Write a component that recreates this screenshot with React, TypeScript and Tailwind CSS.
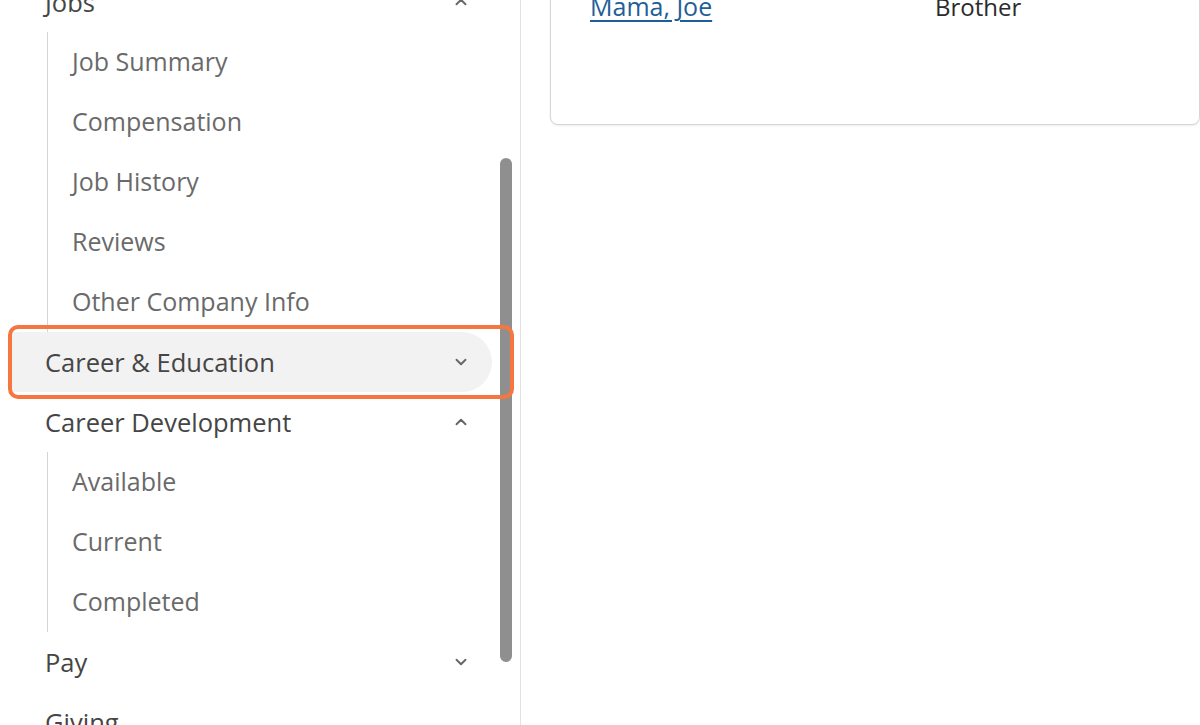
import { ChevronDown, ChevronUp } from 'lucide-react';

type NavItem = {
    label: string;
    open?: boolean;
    active?: boolean;
    noIcon?: boolean;
    children?: string[];
};

const items: NavItem[] = [
    { label: 'Jobs', open: true, children: ['Job Summary', 'Compensation', 'Job History', 'Reviews', 'Other Company Info'] },
    { label: 'Career & Education', active: true },
    { label: 'Career Development', open: true, children: ['Available', 'Current', 'Completed'] },
    { label: 'Pay' },
    { label: 'Giving', noIcon: true },
];

function TopRow({ item }: { item: NavItem }) {
    return (
        <div className="relative ml-3 mr-7">
            <div
                className={`flex h-[60px] items-center justify-between rounded-r-full pl-[33px] pr-[22px] text-[25.5px] text-[#454545] ${
                    item.active ? 'bg-[#f2f2f2]' : ''
                }`}
            >
                <span>{item.label}</span>
                {item.noIcon ? null : item.open ? (
                    <ChevronUp className="h-[18px] w-[18px] text-[#666]" strokeWidth={2.5} />
                ) : (
                    <ChevronDown className="h-[18px] w-[18px] text-[#666]" strokeWidth={2.5} />
                )}
            </div>
            {item.active && (
                <div className="pointer-events-none absolute -left-1 -right-[22px] -top-[7px] -bottom-[7px] z-10 rounded-[10px] border-4 border-[#f5773f]" />
            )}
        </div>
    );
}

export default function App() {
    return (
        <div
            className="flex h-[725px] w-[1200px] overflow-hidden bg-white"
            style={{ fontFamily: '"Open Sans", "Noto Sans", sans-serif' }}
        >
            {/* Sidebar */}
            <aside className="relative h-full w-[521px] shrink-0 overflow-hidden border-r border-[#e2e2e2]">
                {/* Scrollbar thumb */}
                <div className="absolute left-[500px] top-[158px] h-[504px] w-3 rounded-full bg-[#8f8f8f]" />
                <nav className="relative -mt-[28px]">
                    {items.map((item) => (
                        <div key={item.label}>
                            <TopRow item={item} />
                            {item.children && (
                                <ul className="ml-[47px] border-l border-[#d4d4d4]">
                                    {item.children.map((child) => (
                                        <li key={child} className="flex h-[60px] items-center pl-6 text-[25px] text-[#6a6a6a]">
                                            {child}
                                        </li>
                                    ))}
                                </ul>
                            )}
                        </div>
                    ))}
                </nav>
            </aside>

            {/* Main content */}
            <main className="flex-1 pl-[29px]">
                <div className="-mt-[40px] h-[165px] rounded-lg border border-[#d6d6d6] bg-white shadow-[0_1px_2px_rgba(0,0,0,0.08)]">
                    <div className="flex items-center pl-[39px] pt-[27px]">
                        <a href="#" className="w-[345px] text-[25px] text-[#1f5f99] underline underline-offset-4">
                            Mama, Joe
                        </a>
                        <span className="text-[24px] text-[#2b2b2b]">Brother</span>
                    </div>
                </div>
            </main>
        </div>
    );
}
